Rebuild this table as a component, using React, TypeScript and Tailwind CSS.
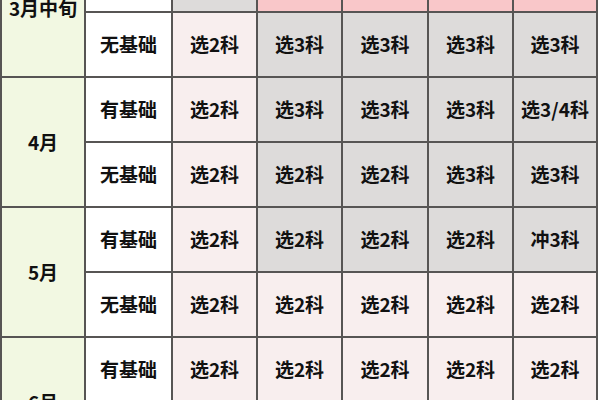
import React from "react";

type Tone = "pink" | "gray" | "rose";

const toneClass: Record<Tone, string> = {
  pink: "bg-[#f8eeee]",
  gray: "bg-[#dddbda]",
  rose: "bg-[#f9c7c9]",
};

type Row = { base: string; cells: [string, Tone][] };

const P = (t: string): [string, Tone] => [t, "pink"];
const G = (t: string): [string, Tone] => [t, "gray"];
const R = (t: string): [string, Tone] => [t, "rose"];

const blocks: { month: string; rows: Row[] }[] = [
  {
    month: "3月中旬",
    rows: [
      { base: "有基础", cells: [G("选2科"), R("选3科"), R("选3科"), R("选4科"), R("选4科")] },
      { base: "无基础", cells: [P("选2科"), G("选3科"), G("选3科"), G("选3科"), G("选3科")] },
    ],
  },
  {
    month: "4月",
    rows: [
      { base: "有基础", cells: [P("选2科"), G("选3科"), G("选3科"), G("选3科"), G("选3/4科")] },
      { base: "无基础", cells: [P("选2科"), G("选2科"), G("选2科"), G("选3科"), G("选3科")] },
    ],
  },
  {
    month: "5月",
    rows: [
      { base: "有基础", cells: [P("选2科"), G("选2科"), G("选2科"), G("选2科"), G("冲3科")] },
      { base: "无基础", cells: [P("选2科"), P("选2科"), P("选2科"), P("选2科"), P("选2科")] },
    ],
  },
  {
    month: "6月",
    rows: [
      { base: "有基础", cells: [P("选2科"), P("选2科"), P("选2科"), P("选2科"), P("选2科")] },
      { base: "无基础", cells: [P("选2科"), P("选2科"), P("选2科"), P("选2科"), P("选2科")] },
    ],
  },
];

export default function App() {
  return (
    <div
      className="w-[600px] h-[400px] overflow-hidden bg-white"
      style={{ fontFamily: '"Noto Sans CJK SC", "Noto Sans", sans-serif' }}
    >
      <div className="-mt-[54px] w-[598px] grid grid-cols-[82px_85px_83px_83px_84px_83px_82px] auto-rows-[63px] gap-[2px] p-[2px] bg-[#575554] text-[19px] font-bold text-[#111]">
        {blocks.map((b, bi) => (
          <React.Fragment key={bi}>
            {b.rows.map((r, ri) => (
              <React.Fragment key={ri}>
                {ri === 0 && (
                  <div
                    className={
                      "col-start-1 row-span-2 bg-[#f2f8e2] flex items-center justify-center " +
                      (bi === 0 ? "pb-[8px]" : "")
                    }
                  >
                    {b.month}
                  </div>
                )}
                <div className="col-start-2 bg-white flex items-center justify-center">{r.base}</div>
                {r.cells.map(([t, tone], ci) => (
                  <div key={ci} className={toneClass[tone] + " flex items-center justify-center"}>
                    {t}
                  </div>
                ))}
              </React.Fragment>
            ))}
          </React.Fragment>
        ))}
      </div>
    </div>
  );
}
